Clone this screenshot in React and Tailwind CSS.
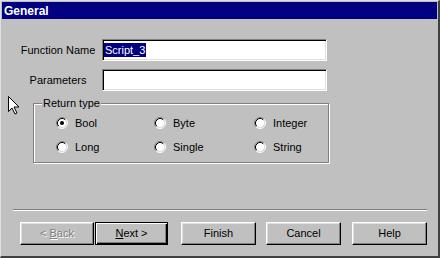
import React from 'react';

const font = "font-['Liberation_Sans',Arial,sans-serif]";

const Radio = ({ label, checked }) => {
  return (
    <div className="flex items-center h-[24px]">
      <svg width="12" height="12" viewBox="0 0 12 12" className="shrink-0">
        <circle cx="6" cy="6" r="4.5" fill="#fff" />
        <path d="M2.11,9.89 A5.5,5.5 0 0 1 9.89,2.11" stroke="#808080" strokeWidth="1" fill="none" />
        <path d="M2.82,9.18 A4.5,4.5 0 0 1 9.18,2.82" stroke="#000" strokeWidth="1" fill="none" />
        <path d="M9.89,2.11 A5.5,5.5 0 0 1 2.11,9.89" stroke="#fff" strokeWidth="1" fill="none" />
        <path d="M9.18,2.82 A4.5,4.5 0 0 1 2.82,9.18" stroke="#dfdfdf" strokeWidth="1" fill="none" />
        {checked && <circle cx="6" cy="6" r="2" fill="#000" />}
      </svg>
      <span className="ml-[7px] text-[11px] leading-none text-black">{label}</span>
    </div>
  );
};

const Button = ({ children, className = '', isDefault, disabled }) => {
  const frame = isDefault
    ? 'border border-black shadow-[inset_1px_1px_0_#fff,inset_-1px_-1px_0_#000,inset_-2px_-2px_0_#808080]'
    : 'border border-t-white border-l-white border-r-black border-b-black shadow-[inset_-1px_-1px_0_#808080,inset_1px_1px_0_#dfdfdf]';
  return (
    <button
      type="button"
      className={`h-[23px] bg-[#c0c0c0] text-[11px] leading-none flex items-center justify-center ${frame} ${
        disabled ? 'text-[#808080] [text-shadow:1px_1px_0_#fff]' : 'text-black'
      } ${className}`}
    >
      {children}
    </button>
  );
};

const Field = ({ label, children, className = '' }) => (
  <div className={`flex items-center ${className}`}>
    <div className="w-[76px] ml-[19px] text-center text-[11px] text-black">{label}</div>
    <div className="ml-[6px] w-[225px] h-[22px] bg-white border border-t-[#808080] border-l-[#808080] border-r-white border-b-white shadow-[inset_1px_1px_0_#000,inset_-1px_-1px_0_#dfdfdf] flex items-center pl-[1px]">
      {children}
    </div>
  </div>
);

export default function App() {
  return (
    <div className={`relative w-[440px] h-[258px] bg-[#c0c0c0] border-t border-l border-t-[#dfdfdf] border-l-[#dfdfdf] border-r-2 border-b-2 border-r-[#404040] border-b-[#404040] ${font}`}>
      <div className="mx-px mt-px h-[17px] bg-[#000080] flex items-center pl-[2px]">
        <span className="text-white font-bold text-[12px] leading-none">General</span>
      </div>

      <Field label="Function Name" className="mt-[20px]">
        <span className="inline-block bg-[#000080] text-white text-[11px] leading-[14px] h-[14px] px-px">Script_3</span>
      </Field>
      <Field label="Parameters" className="mt-[8px]" />

      <div className="relative ml-[32px] mt-[12px] w-[296px] h-[60px] border border-[#808080] shadow-[inset_1px_1px_0_#fff,1px_1px_0_#fff]">
        <span className="absolute -top-[7px] left-[8px] px-px bg-[#c0c0c0] text-[11px] leading-[13px] text-black">Return type</span>
        <div className="grid grid-cols-[98px_100px_auto] pl-[22px] pt-[7px]">
          <Radio label="Bool" checked />
          <Radio label="Byte" />
          <Radio label="Integer" />
          <Radio label="Long" />
          <Radio label="Single" />
          <Radio label="String" />
        </div>
      </div>

      <div className="mt-[46px] ml-[12px] w-[414px] border-t border-b border-t-[#808080] border-b-white" />

      <div className="flex mt-[11px]">
        <Button className="ml-[19px] w-[74px]" disabled>
          &lt;&nbsp;<u>B</u>ack
        </Button>
        <Button className="ml-[1px] w-[73px]" isDefault>
          <u>N</u>ext &gt;
        </Button>
        <Button className="ml-[13px] w-[75px]">Finish</Button>
        <Button className="ml-[10px] w-[75px]">Cancel</Button>
        <Button className="ml-[11px] w-[75px]">Help</Button>
      </div>

      <svg width="13" height="20" viewBox="0 0 13 20" className="absolute left-[6px] top-[94px]">
        <path d="M1.5,1.5 L1.5,16.5 L5,13 L8,19 L10,18 L7,12 L12,12 Z" fill="#fff" stroke="#000" strokeWidth="1" strokeLinejoin="miter" />
      </svg>
    </div>
  );
}
